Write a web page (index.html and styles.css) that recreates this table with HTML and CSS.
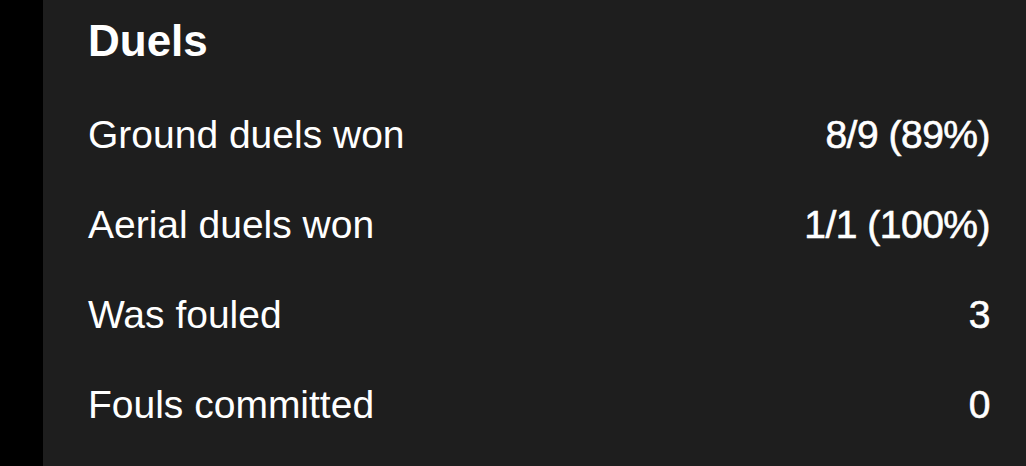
FILE: index.html
```html
<!DOCTYPE html>
<html lang="en">
<head>
<meta charset="utf-8">
<title>Duels</title>
<link rel="stylesheet" href="styles.css">
</head>
<body>
<div class="page">
  <div class="rail"></div>
  <section class="panel">
    <h2 class="title">Duels</h2>
    <ul class="stats">
      <li class="row"><span class="label">Ground duels won</span><span class="value">8/9 (89%)</span></li>
      <li class="row"><span class="label">Aerial duels won</span><span class="value">1/1 (100%)</span></li>
      <li class="row"><span class="label">Was fouled</span><span class="value">3</span></li>
      <li class="row"><span class="label">Fouls committed</span><span class="value">0</span></li>
    </ul>
  </section>
</div>
</body>
</html>
```

FILE: styles.css
```css
html, body {
  margin: 0;
  padding: 0;
  background: #000;
  height: 100%;
}
.page {
  display: flex;
  height: 466px;
  font-family: "Liberation Sans", Arial, sans-serif;
  color: #fff;
}
.rail {
  width: 43px;
  flex: none;
  background: #000;
}
.panel {
  flex: 1;
  background: #1e1e1e;
  padding: 11px 36px 0 45px;
}
.title {
  margin: 0;
  font-size: 44px;
  line-height: 60px;
  font-weight: 700;
}
.stats {
  list-style: none;
  margin: 19px 0 0;
  padding: 0;
}
.row {
  display: flex;
  justify-content: space-between;
  align-items: center;
  height: 90px;
  font-size: 39px;
  line-height: 90px;
}
.value {
  -webkit-text-stroke: 0.6px #fff;
  letter-spacing: -0.5px;
}
```
